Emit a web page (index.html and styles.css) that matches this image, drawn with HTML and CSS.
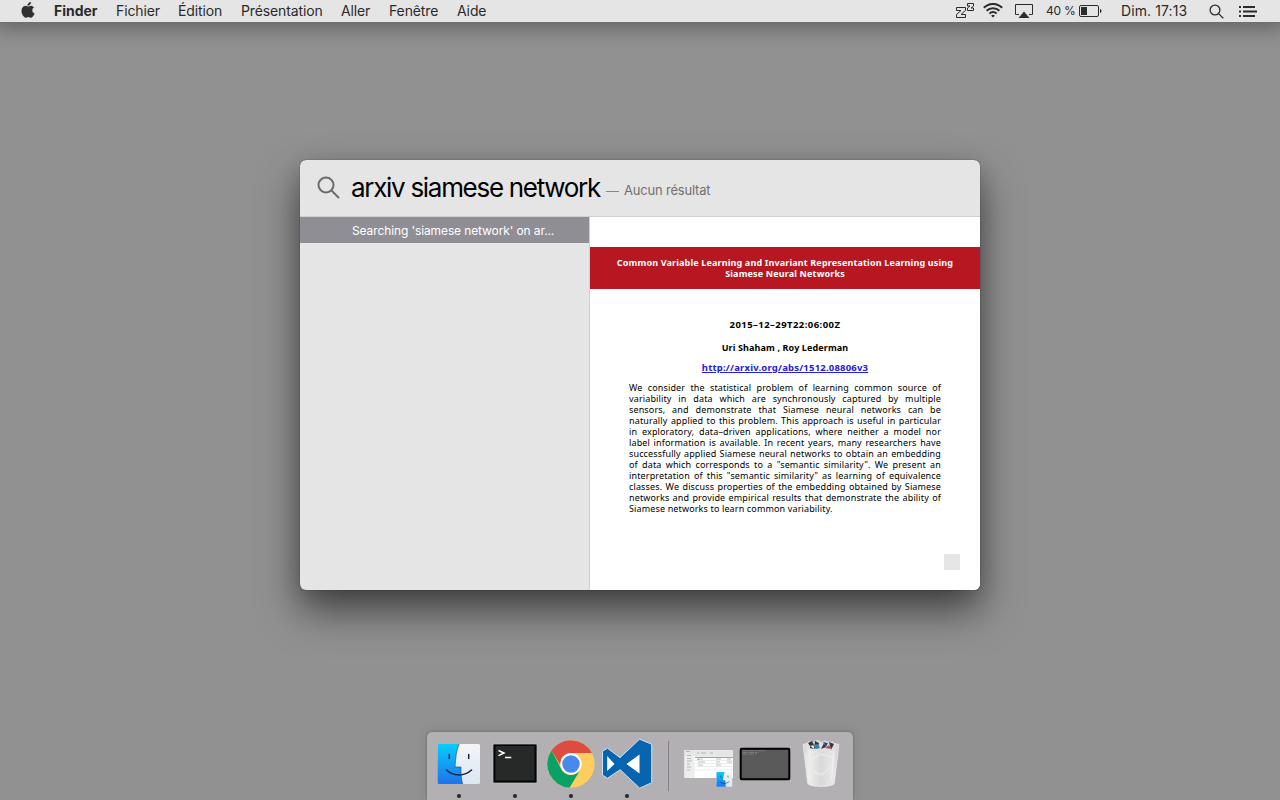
FILE: index.html
```html
<!DOCTYPE html>
<html lang="fr">
<head>
<meta charset="utf-8">
<title>Spotlight</title>
<link rel="stylesheet" href="styles.css">
</head>
<body>
<div class="desktop">
  <header class="menubar">
    <svg class="apple" width="14" height="17" viewBox="0 0 14 17"><path d="M9.800 0C10 1.800 8.400 3.600 6.700 3.500 6.500 1.900 8.100.2 9.800 0ZM7 4.800C7.700 4.800 8.600 4 10 4c1.100 0 2.200.6 2.800 1.500-2.500 1.400-2.100 4.900.5 5.900-.6 1.800-1.900 4.100-3.300 4.100-1 0-1.400-.6-2.600-.6s-1.700.6-2.600.6C2.900 15.500.7 12 .7 9 .7 5.900 2.500 4.100 4.500 4.100c1.100 0 1.900.7 2.500.7Z"/></svg>
    <nav class="menus">
      <span class="app">Finder</span><span>Fichier</span><span>Édition</span><span>Présentation</span><span>Aller</span><span>Fenêtre</span><span>Aide</span>
    </nav>
    <div class="status">
      <svg class="zz" width="19" height="15" viewBox="0 0 19 15"><path d="M.5 4.500h9v3L5 11.500h4.500v3h-9v-3L5 7.500H.5Z"/><path d="M11.500.5h6v2.500L15 5h2.500v2.500h-6V5L14 3h-2.500Z"/></svg>
      <svg class="wifi" width="20" height="15" viewBox="0 0 20 15"><path d="M.8 4.800a13 13 0 0 1 18.400 0M3.600 7.800a9 9 0 0 1 12.800 0M6.400 10.600a5 5 0 0 1 7.200 0"/><path class="solid" d="m8.100 12.700 1.900 1.900 1.900-1.900a2.700 2.700 0 0 0-3.800 0Z"/></svg>
      <svg class="airplay" width="18" height="14" viewBox="0 0 18 14"><path d="M4 10.500H.5V.5h17v10H14"/><path class="solid" d="m9 7.500 5.500 6.500h-11Z"/></svg>
      <span class="percent">40 %</span>
      <svg class="battery" width="23" height="12" viewBox="0 0 23 12"><rect x=".5" y=".5" width="19" height="11" rx="1.500"/><path class="solid" d="M2 2h6v8H2ZM21 4c2 .5 2 3.500 0 4Z"/></svg>
      <span class="clock">Dim. 17:13</span>
      <svg class="glass" width="15" height="15" viewBox="0 0 15 15"><circle cx="6" cy="6" r="4.900"/><path d="m9.600 9.600 4.700 4.700"/></svg>
      <svg class="list" width="18" height="11" viewBox="0 0 18 11"><path d="M0 1h2M4 1h12M0 5.500h2M4 5.500h14M0 10h2M4 10h12"/></svg>
    </div>
  </header>

  <main class="stage">
    <section class="spotlight">
      <div class="searchbar">
        <svg class="lens" width="24" height="24" viewBox="0 0 24 24"><circle cx="9" cy="9" r="7.500"/><path d="m14.500 14.500 7.500 7.500"/></svg>
        <span class="query">arxiv siamese network</span>
        <span class="dash"></span>
        <span class="none">Aucun résultat</span>
      </div>
      <div class="content">
        <div class="results"><div class="row"><span>Searching 'siamese network' on ar...</span></div></div>
        <article class="preview">
          <h1><span>Common Variable Learning and Invariant Representation Learning using</span><span>Siamese Neural Networks</span></h1>
          <p class="date">2015–12–29T22:06:00Z</p>
          <p class="authors">Uri Shaham , Roy Lederman</p>
          <p class="link"><a>http://arxiv.org/abs/1512.08806v3</a></p>
          <div class="abstract">
            <p>We consider the statistical problem of learning common source of</p>
            <p>variability in data which are synchronously captured by multiple</p>
            <p>sensors, and demonstrate that Siamese neural networks can be</p>
            <p>naturally applied to this problem. This approach is useful in particular</p>
            <p>in exploratory, data–driven applications, where neither a model nor</p>
            <p>label information is available. In recent years, many researchers have</p>
            <p>successfully applied Siamese neural networks to obtain an embedding</p>
            <p>of data which corresponds to a "semantic similarity". We present an</p>
            <p>interpretation of this "semantic similarity" as learning of equivalence</p>
            <p>classes. We discuss properties of the embedding obtained by Siamese</p>
            <p>networks and provide empirical results that demonstrate the ability of</p>
            <p class="last">Siamese networks to learn common variability.</p>
          </div>
          <div class="square"></div>
        </article>
      </div>
    </section>
  </main>

  <footer class="dock">
    <svg width="426" height="68" viewBox="427 732 426 68">
      <defs>
        <linearGradient id="blue" x1="0" y1="0" x2="0" y2="1"><stop stop-color="#06cdfb"/><stop offset="1" stop-color="#1e73ee"/></linearGradient>
        <linearGradient id="pale" x1="0" y1="0" x2="0" y2="1"><stop stop-color="#f5f5f8"/><stop offset="1" stop-color="#dae7f3"/></linearGradient>
        <linearGradient id="bin" x1="0" y1="0" x2="1" y2="0"><stop stop-color="#d1d0d1"/><stop offset=".18" stop-color="#ededec"/><stop offset=".5" stop-color="#dad9d9"/><stop offset=".85" stop-color="#e9e8e8"/><stop offset="1" stop-color="#c8c7c8"/></linearGradient>
        <g id="face">
          <rect width="42.500" height="40" rx="1.500" fill="url(#pale)"/>
          <path d="M1.500 0H21.500c-2.500 6-3.500 14-4 23h6c-.2 7 .3 11.500 1.500 17H1.500A1.500 1.500 0 0 1 0 38.500v-37A1.500 1.500 0 0 1 1.500 0Z" fill="url(#blue)"/>
          <path d="M21.500 0c-2.500 6-3.500 14-4 23h6c-.2 7 .3 11.500 1.500 17" fill="none" stroke="#1c5894" stroke-width=".7"/>
          <path d="M11.800 10.500v4M31.200 10.500v4M9 26c7 6.500 18 6.500 25 0" fill="none" stroke="#172436" stroke-width="1.500" stroke-linecap="round"/>
        </g>
      </defs>
      <use href="#face" x="437.500" y="744"/>
      <rect x="493" y="744" width="44" height="39" rx="1" fill="#050505" stroke="#b5c8c5" stroke-width=".7"/>
      <rect x="495.500" y="746" width="39" height="34.500" fill="#272828"/>
      <path d="m498.500 750.500 5.500 2.500-5.500 2.700M505 757.500h6.300" fill="none" stroke="#fff" stroke-width="1.500"/>

      <circle cx="571" cy="764" r="23.700" fill="#fdce5d"/>
      <path d="M551.500 750.500A23.700 23.700 0 0 1 591.900 753H571a11 11 0 0 0-10 6.500l-.5 6Z" fill="#dc4c40"/>
      <path d="M551.500 750.500A23.700 23.700 0 0 0 569.500 787.700l11-18.200A11 11 0 0 1 561 768.500Z" fill="#09a164"/>
      <circle cx="571" cy="764" r="9.700" fill="#4989ed" stroke="#fff" stroke-width="2"/>

      <path d="m639.500 739.200 12.200 5v38.500l-12 5.500-19.500-18.500-12.700 8.500-5-3v-24l5-3 12.500 9.500Z" fill="#0765b0" stroke="#cde1ef" stroke-width="1"/>
      <path d="m607.200 756 7.300 8-7.300 7ZM639.500 754.500v19l-13-9.500Z" fill="#fff"/>

      <path d="M668.500 741v50" stroke="#858286"/>
      <rect x="684.500" y="750" width="48.500" height="28" fill="#fff"/>
      <path d="M684.500 750H733v6h-48.500Z" fill="#e5e6e6"/>
      <path d="M684.500 756h10v22h-10Z" fill="#ededed"/>
      <path d="M686 751.500h4M697 753h2M701 753h5M710 753h3M687 755.500h4M687 758.500h4M687 761h5M687 764h3M687 767h4M687 770h3M698 759h5M698 762h7M698 765h5M716 759h5M716 762h4M716 765h5M727 759h4M727 762h5" stroke="#9ba0a3" stroke-width=".7"/>
      <path d="M695 757.300h38" stroke="#6b7173" stroke-width=".8"/>
      <path d="M695 760.500h38M695 763.500h38M695 766.500h38M695 770h38" stroke="#d5d6d6" stroke-width=".5"/>
      <path d="M697 759.300h2" stroke="#36c9e4"/>
      <g transform="translate(716.500 772) scale(.37)"><use href="#face"/></g>
      <rect x="740.700" y="748.700" width="48.600" height="30.600" rx="1" fill="#5a5a5a" stroke="#000" stroke-width="2"/>
      <path d="M742.500 750.700h23M742.500 752.500h16M742.500 754h14" stroke="#929292" stroke-width=".6" stroke-dasharray="4 1 2 .5"/>

      <path d="M803.200 744.500c4-2 31-2 35.600 0l-4.500 38.500c-.3 4.500-26.300 4.500-26.600 0Z" fill="url(#bin)" stroke="#f1f1f0" stroke-width=".8"/>
      <path d="m805 745 4-4 5 1 3-2 5 2 3-1.500 4 1.500 4-.5 4 4.500-4 5-12 1-12-2Z" fill="#dddedd"/>
      <path d="m808 743 4-2 2 4-4 1ZM815 741l4 2-1 4-4 2ZM821 749l3-6 2 4ZM829 742l5 2-3 6ZM810 746l4 3-4-1Z" fill="#38383b"/>
      <path d="m813 745 5-1 2 4-4 1Z" fill="#3188a8"/><path d="m823 742 5 1-2 4Z" fill="#354b90"/><path d="m825 748 4-3 2 4Z" fill="#b5504e"/>
      <path d="M804 747c6 4 28 4 34 0" fill="none" stroke="#efefee" stroke-width=".7" opacity=".5"/>
      <path d="m806 753 3 27m25-27-3 27m-19-21 8-5 12 3m-18 15 8 3 8-8" stroke="#fff" opacity=".25" fill="none" stroke-width="2"/>
      <g fill="#2b2a2c"><circle cx="459" cy="796" r="2.100"/><circle cx="515" cy="796" r="2.100"/><circle cx="571" cy="796" r="2.100"/><circle cx="627" cy="796" r="2.100"/></g>
    </svg>
  </footer>
</div>
</body>
</html>
```
FILE: styles.css
```css
body { margin: 0; font-family: Inter, "Liberation Sans", sans-serif; color: #2b2b2b; }
* { box-sizing: border-box; }
p, h1 { margin: 0; }
svg { display: block; flex: none; }
.desktop { width: 1280px; height: 800px; display: flex; flex-direction: column; align-items: center; background: #919191; overflow: hidden; }

.menubar { width: 1280px; height: 22px; flex: none; display: flex; background: #e5e5e5; box-shadow: 0 1px 0 #707070, 0 3px 20px 4px rgba(0, 0, 0, .3); font-size: 14px; line-height: 22px; white-space: nowrap; }
.apple { margin: 2px 0 0 20.5px; fill: #303030; stroke: #303030; stroke-width: .4; }
.menus { margin-left: 19.5px; display: grid; grid-template-columns: 62px 62px 63px 100px 48px 68px 40px; }
.menus span { letter-spacing: -.12px; }
.menus .app { font-weight: 700; letter-spacing: -.02px; }
.status { margin-left: auto; display: flex; padding-right: 23px; }
.status svg { fill: none; stroke: #2c2c2c; }
.status .solid { fill: #2c2c2c; stroke: none; }
.zz { margin: 3px 8px 0 0; }
.wifi { margin: 3px 12px 0 0; stroke-width: 2; }
.airplay { margin: 4px 13px 0 0; }
.percent { width: 33px; font-size: 12px; letter-spacing: -.2px; }
.battery { margin: 5px 19px 0 0; }
.clock { width: 88px; letter-spacing: .1px; }
.glass { margin: 4px 15px 0 0; stroke-width: 1.3; }
.list { margin-top: 6px; stroke-width: 2; }

.stage { flex: 1; padding-top: 138px; }
.spotlight { width: 680px; height: 430px; border-radius: 6px; background: #e5e5e5; display: flex; flex-direction: column; box-shadow: 0 0 1px rgba(0, 0, 0, .7), 0 20px 40px rgba(0, 0, 0, .55), 0 4px 20px rgba(0, 0, 0, .12); }
.searchbar { height: 57px; border-bottom: 1px solid #cfcfcf; display: flex; white-space: nowrap; padding-left: 17px; }
.lens { margin-top: 16px; fill: none; stroke: #6c6c6c; stroke-width: 2; }
.query { margin-left: 10px; width: 255px; font-size: 26px; line-height: 56px; color: #000; letter-spacing: -1.3px; }
.dash { width: 13px; height: 1px; margin: 31px 5px 0 0; background: #888; }
.none { font-size: 13px; line-height: 60px; color: #717171; letter-spacing: -.2px; }
.content { flex: 1; display: flex; }
.results { width: 290px; border-right: 1px solid #cfcfcf; }
.row { height: 26px; padding-left: 52px; background: #8f8e95; color: #fff; font-size: 12px; line-height: 27px; white-space: nowrap; letter-spacing: -.11px; }
.preview { width: 390px; height: 373px; padding-top: 30px; background: #fff; border-radius: 0 0 6px 0; display: flex; flex-direction: column; font-family: "Noto Sans", sans-serif; font-size: 9px; line-height: 11px; color: #000; text-align: center; white-space: nowrap; }
.preview h1 { height: 42px; padding-top: 10px; background: #b71721; color: #fff; font-size: 9px; line-height: 11px; letter-spacing: .15px; display: flex; flex-direction: column; align-items: center; }
.date, .authors, .link { font-weight: 700; }
.date { margin-top: 30px; font-size: 9.5px; letter-spacing: .45px; }
.authors { margin-top: 12px; letter-spacing: .12px; }
.link { margin-top: 9px; color: #2420dc; font-size: 9.5px; letter-spacing: .2px; }
.link a { text-decoration: underline; }
.abstract { width: 312px; margin: 9px 0 0 39px; text-align: left; }
.abstract p { text-align: justify; text-align-last: justify; height: 11px; letter-spacing: .14px; }
.abstract .last { text-align-last: left; }
.square { width: 16px; height: 16px; margin: 40px 20px 0 auto; background: #e6e6e6; }

.dock { width: 426px; height: 68px; border-radius: 5px 5px 0 0; background: #b3b0b3; box-shadow: 0 0 2px rgba(0, 0, 0, .35), 0 0 12px rgba(0, 0, 0, .12); overflow: hidden; }
```
